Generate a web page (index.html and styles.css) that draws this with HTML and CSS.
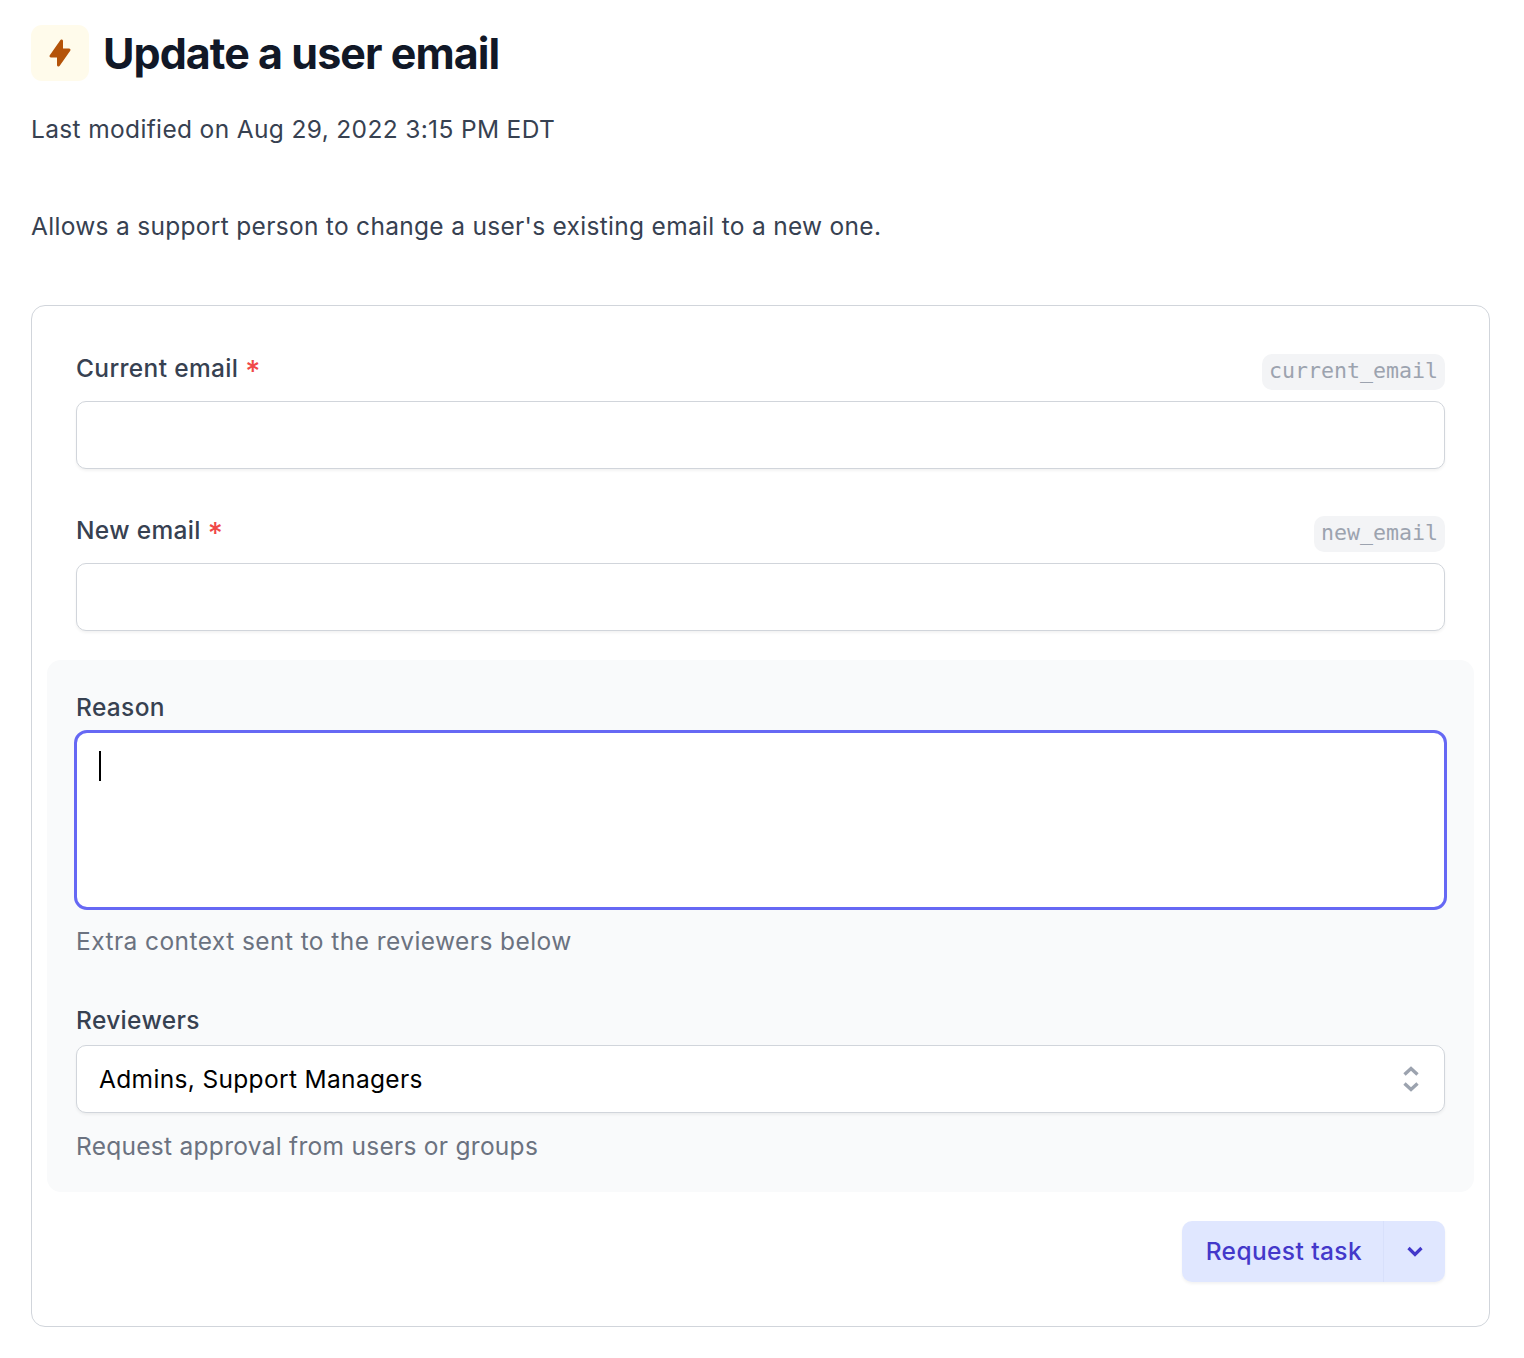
FILE: index.html
```html
<!DOCTYPE html>
<html lang="en">
<head>
<meta charset="utf-8">
<title>Update a user email</title>
<link rel="stylesheet" href="styles.css">
</head>
<body>
<main class="page">
  <header class="title-row">
    <div class="task-icon">
      <svg width="30" height="30" viewBox="0 0 20 20"><path class="bolt" fill-rule="evenodd" clip-rule="evenodd" d="M11.3 1.046A1 1 0 0 1 12 2v5h4a1 1 0 0 1 .82 1.573l-7 10A1 1 0 0 1 8 18v-5H4a1 1 0 0 1-.82-1.573l7-10a1 1 0 0 1 1.12-.38z"/></svg>
    </div>
    <h1 class="title">Update a user email</h1>
  </header>
  <p class="modified">Last modified on Aug 29, 2022 3:15 PM EDT</p>
  <p class="description">Allows a support person to change a user's existing email to a new one.</p>

  <section class="card">
    <div class="fields">
      <div class="field">
        <div class="label-row">
          <label class="label">Current email <span class="req">*</span></label>
          <code class="slug">current_email</code>
        </div>
        <div class="input"></div>
      </div>
      <div class="field field-second">
        <div class="label-row">
          <label class="label">New email <span class="req">*</span></label>
          <code class="slug">new_email</code>
        </div>
        <div class="input"></div>
      </div>
    </div>

    <div class="panel">
      <label class="label label-plain">Reason</label>
      <div class="textarea"><span class="caret"></span></div>
      <p class="hint hint-context">Extra context sent to the reviewers below</p>
      <label class="label label-plain label-reviewers">Reviewers</label>
      <div class="select">
        <span>Admins, Support Managers</span>
        <svg class="updown" width="20" height="30" viewBox="0 0 20 30"><path d="M3.5 10.500 10 4.500l6.500 6M3.500 19.500l6.500 6 6.500-6"/></svg>
      </div>
      <p class="hint hint-approval">Request approval from users or groups</p>
    </div>

    <div class="actions">
      <div class="split">
        <span class="split-main">Request task</span>
        <span class="split-caret">
          <svg width="18" height="12" viewBox="0 0 18 12"><path d="M2.500 2 9 8.500 15.500 2"/></svg>
        </span>
      </div>
    </div>
  </section>
</main>
</body>
</html>
```
FILE: styles.css
```css
* { box-sizing: border-box; }
html, body { margin: 0; padding: 0; background: #fff; }
body { font-family: Inter, "Liberation Sans", sans-serif; color: #374151; letter-spacing: .34px; }
.page { padding: 25px 34px 31px 31px; }
.title-row { display: flex; align-items: center; gap: 14px; }
.task-icon {
  width: 58px; height: 56px; border-radius: 11px; background: #fffbeb;
  display: flex; align-items: center; justify-content: center;
}
.bolt { fill: #b45309; }
.title { margin: 0; font-size: 43px; line-height: 56px; font-weight: 700; letter-spacing: -.95px; color: #111827; }
.modified { margin: 31px 0 0; font-size: 24.5px; line-height: 35px; letter-spacing: .35px; }
.description { margin: 62px 0 0; font-size: 24.5px; line-height: 35px; letter-spacing: .3px; }
.card { margin-top: 61px; height: 1022px; border: 1px solid #d1d5db; border-radius: 14px; padding: 45px 15px 0; }
.fields { padding: 0 29px; }
.field-second { margin-top: 44px; }
.label-row { display: flex; justify-content: space-between; align-items: flex-start; height: 50px; }
.label { font-size: 24.5px; line-height: 35px; font-weight: 500; color: #374151; }
.req { color: #f04848; font-size: 29px; line-height: 0; vertical-align: -4px; }
.slug {
  margin-top: 3px; height: 36px; padding: 0 7px; border-radius: 10px; background: #f3f4f6; color: #9ca3af;
  font-family: "DejaVu Sans Mono", monospace; font-size: 21.6px; line-height: 34px; font-weight: 400; letter-spacing: 0;
}
.input { height: 68px; background: #fff; border: 1px solid #d1d5db; border-radius: 10px; box-shadow: 0 2px 3px rgba(0,0,0,.05); }
.panel { margin-top: 29px; height: 532px; padding: 30px 29px 0; background: #f9fafb; border-radius: 14px; }
.label-plain { display: block; }
.textarea { margin: 5px -2px 0; height: 180px; padding: 18px 22px; background: #fff; border: 3px solid #6668f4; border-radius: 13px; }
.caret { display: block; width: 2px; height: 30px; background: #000; }
.hint { margin: 14px 0 0; font-size: 24.5px; line-height: 35px; color: #6b7280; }
.hint-context { letter-spacing: .43px; }
.hint-approval { letter-spacing: .28px; }
.label-reviewers { margin-top: 44px; }
.select {
  margin-top: 7px; height: 68px; display: flex; align-items: center; justify-content: space-between;
  padding: 0 23px 0 22px; background: #fff; border: 1px solid #d1d5db; border-radius: 10px; box-shadow: 0 2px 3px rgba(0,0,0,.05);
  font-size: 24.5px; color: #000;
}
.updown { fill: none; stroke: #9ca3af; stroke-width: 3.4; }
.select + .hint { margin-top: 16px; }
.actions { display: flex; justify-content: flex-end; padding: 29px 29px 0; }
.split { display: flex; height: 61px; border-radius: 10px; background: #e0e7ff; color: #4338ca; box-shadow: 0 2px 3px rgba(0,0,0,.05); }
.split-main { display: flex; align-items: center; padding: 0 21px 2px 24px; font-size: 24.5px; font-weight: 500; letter-spacing: .4px; border-right: 1px solid #d8e0fb; }
.split-caret { display: flex; align-items: center; justify-content: center; width: 61px; }
.split-caret path { fill: none; stroke: #4338ca; stroke-width: 3.2; }
```
